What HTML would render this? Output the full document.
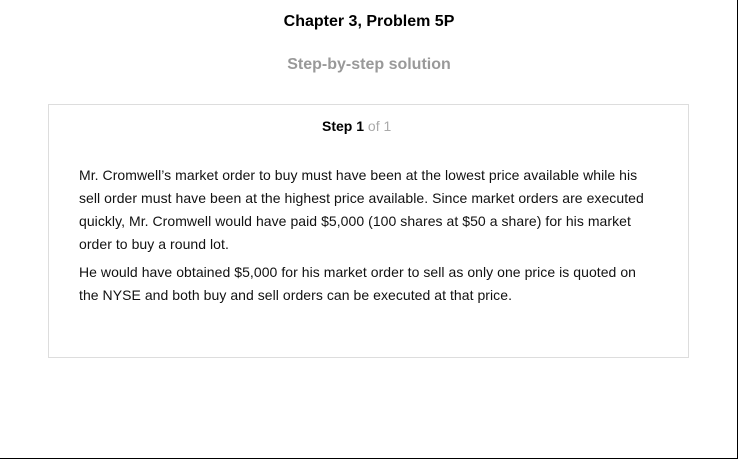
<!DOCTYPE html>
<html><head><meta charset="utf-8"><style>
html,body{margin:0;padding:0;background:#fff;}
body{width:738px;height:459px;position:relative;overflow:hidden;font-family:"Liberation Sans",Arial,sans-serif;}
.frame{position:absolute;left:0;top:0;width:737px;height:458px;border-right:1px solid #000;border-bottom:1px solid #000;box-sizing:content-box;}
.t1{position:absolute;left:0;width:738px;top:13px;text-align:center;font-weight:bold;font-size:16px;color:#000;}
.t2{position:absolute;left:0;width:738px;top:56px;text-align:center;font-weight:bold;font-size:16px;color:#999;}
.box{position:absolute;left:48px;top:104px;width:639px;height:252px;border:1px solid #ddd;}
.step{position:absolute;left:322px;top:118px;font-size:14px;font-weight:bold;color:#000;}
.step span{font-weight:normal;color:#aaa;}
.p{position:absolute;left:79px;font-size:14px;line-height:23px;color:#111;white-space:nowrap;letter-spacing:0.05px;}
</style></head><body>
<div class="frame"></div>
<div class="t1">Chapter 3, Problem 5P</div>
<div class="t2">Step-by-step solution</div>
<div class="box"></div>
<div class="step">Step 1 <span>of 1</span></div>
<div class="p" style="top:164px">Mr. Cromwell’s market order to buy must have been at the lowest price available while his<br>sell order must have been at the highest price available. Since market orders are executed<br>quickly, Mr. Cromwell would have paid $5,000 (100 shares at $50 a share) for his market<br>order to buy a round lot.</div>
<div class="p" style="top:261px">He would have obtained $5,000 for his market order to sell as only one price is quoted on<br>the NYSE and both buy and sell orders can be executed at that price.</div>
</body></html>
